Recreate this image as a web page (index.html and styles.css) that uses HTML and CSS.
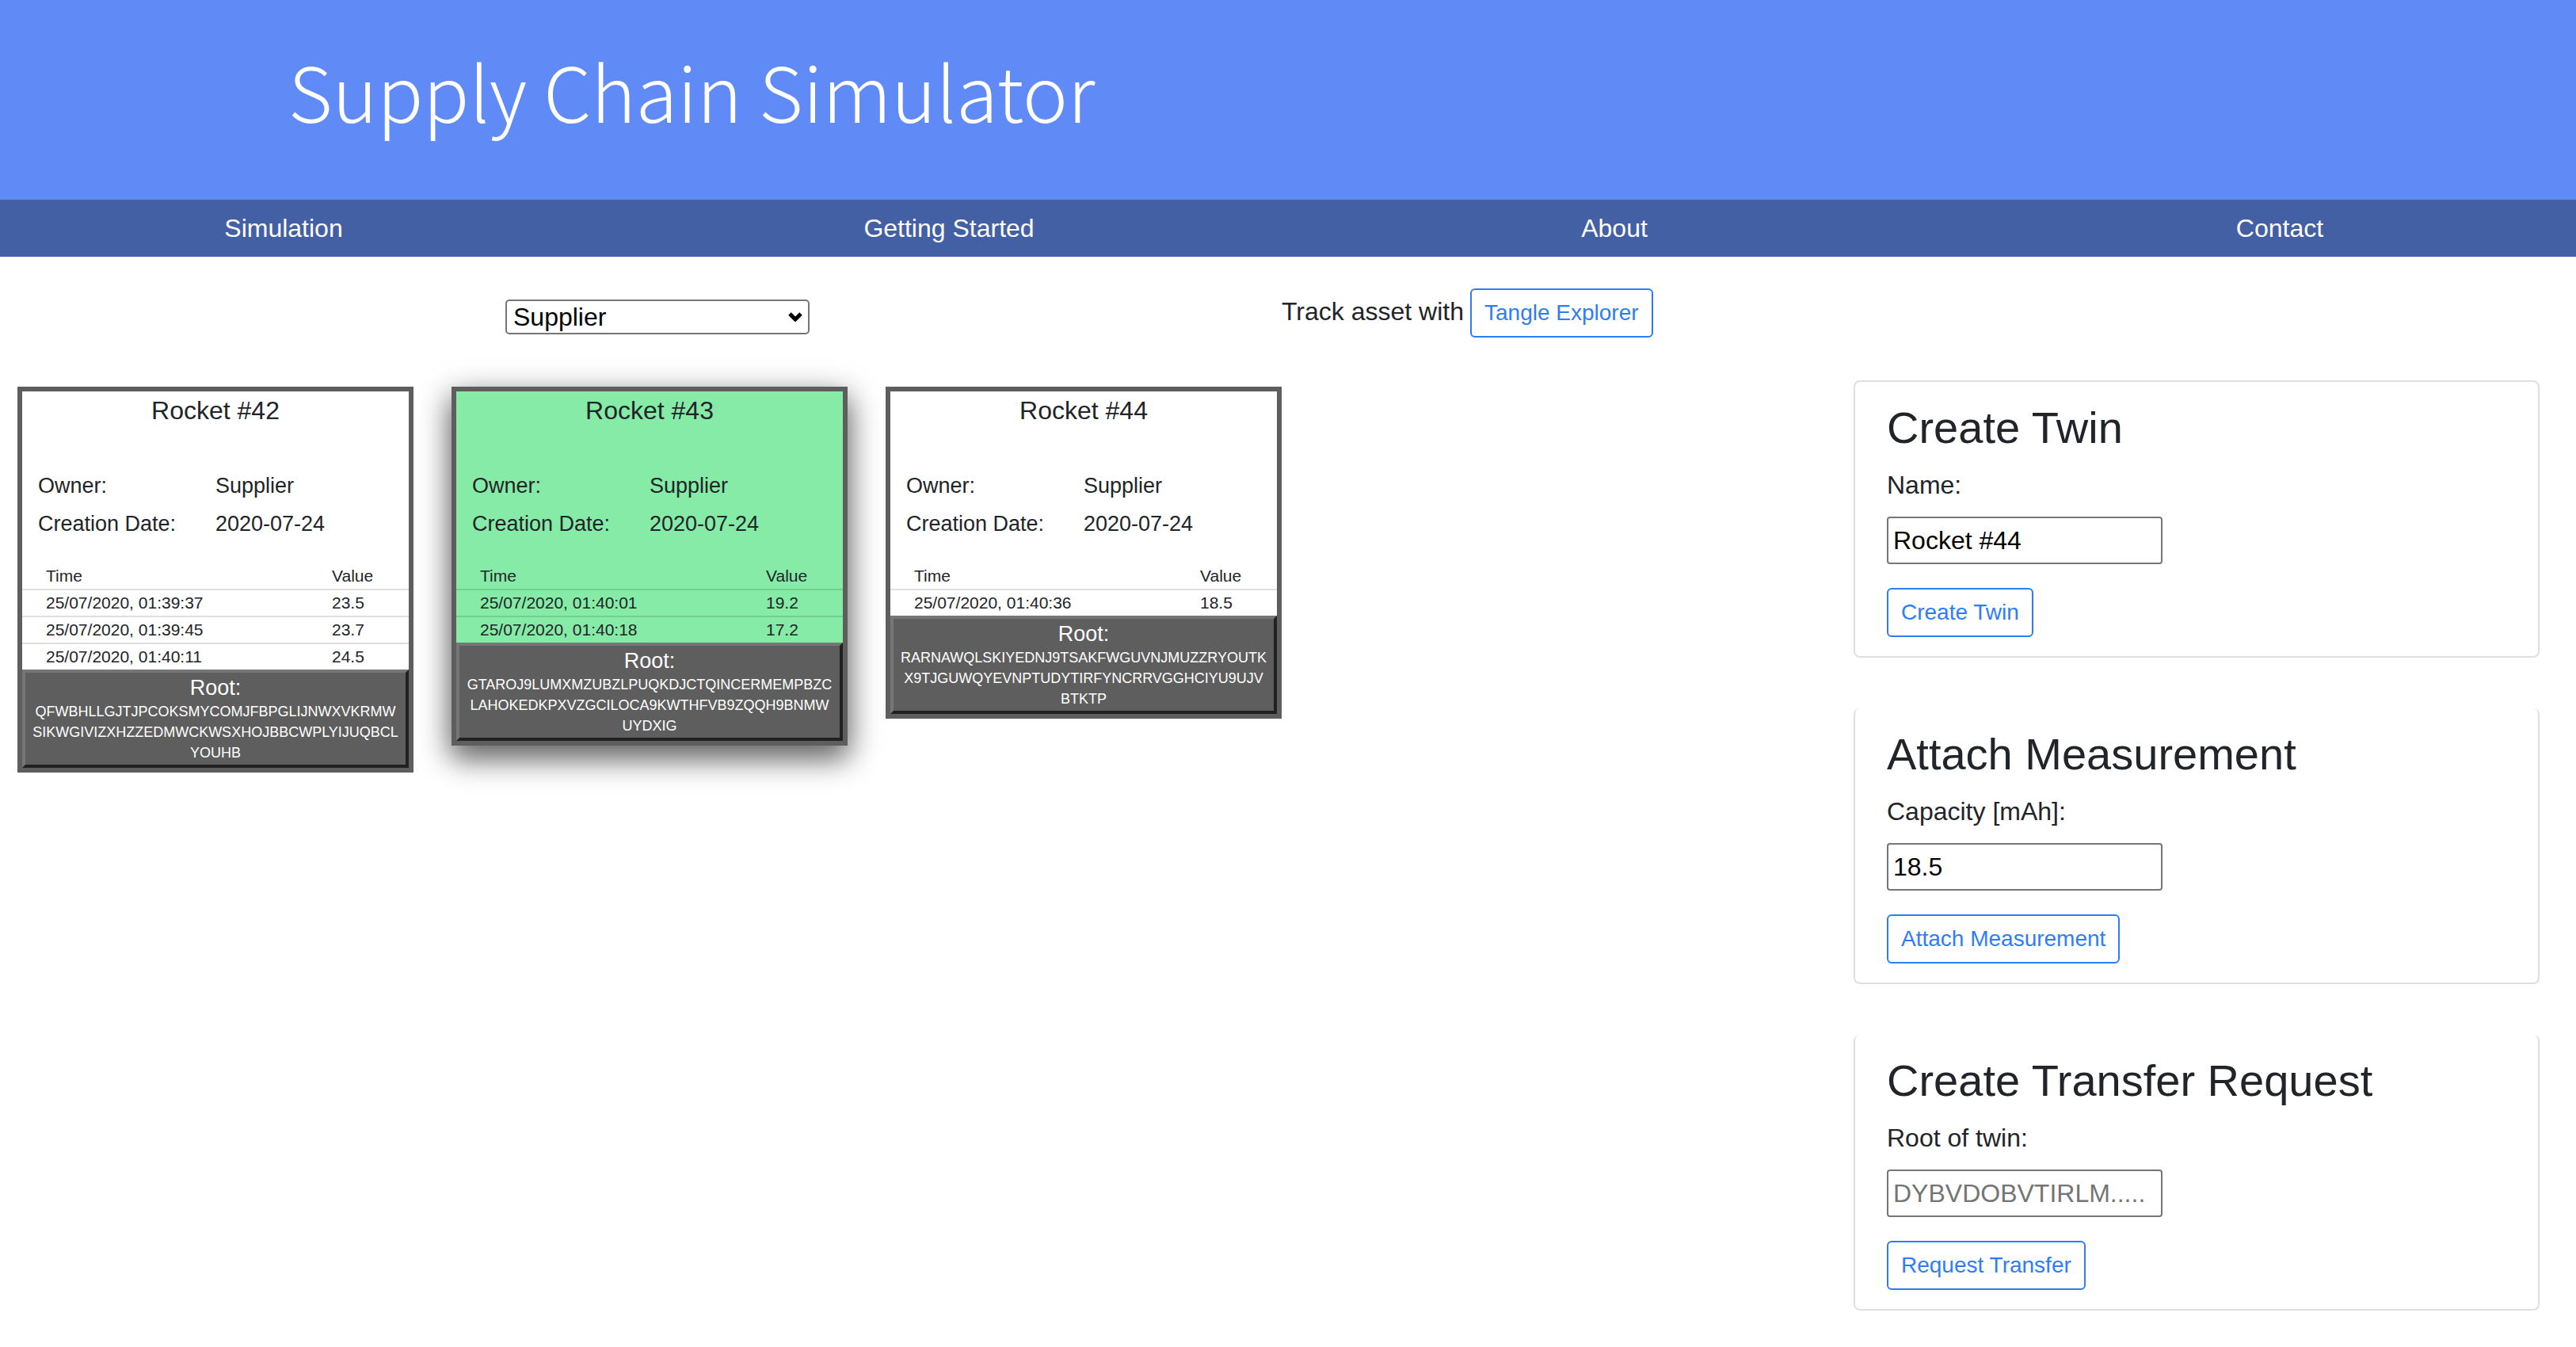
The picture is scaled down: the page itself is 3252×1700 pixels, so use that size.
FILE: index.html
```html
<!DOCTYPE html>
<html lang="en">
<head>
<meta charset="utf-8">
<meta name="viewport" content="width=device-width, initial-scale=1">
<title>Supply Chain Simulator</title>
<link rel="stylesheet" href="styles.css">
</head>
<body>
<header class="banner">
  <h1 class="banner-title">Supply Chain Simulator</h1>
</header>
<nav class="nav">
  <a class="nav-link" href="#simulation">Simulation</a>
  <a class="nav-link" href="#getting-started">Getting Started</a>
  <a class="nav-link" href="#about">About</a>
  <a class="nav-link" href="#contact">Contact</a>
</nav>
<section class="toolbar">
  <div class="role">
    <select class="role-select" aria-label="Role">
      <option>Supplier</option>
    </select>
    <svg class="role-arrow" viewBox="0 0 18 12" aria-hidden="true"><path d="M2 2l7 7 7-7" fill="none" stroke="#000" stroke-width="5"/></svg>
  </div>
  <div class="track">
    <span>Track asset with</span>
    <button class="btn" type="button">Tangle Explorer</button>
  </div>
</section>
<main class="content">
  <div class="twins">
    <article class="twin">
      <h2 class="twin-title">Rocket #42</h2>
      <dl class="facts">
        <dt>Owner:</dt><dd>Supplier</dd>
        <dt>Creation Date:</dt><dd>2020-07-24</dd>
      </dl>
      <table class="log">
        <thead><tr><th class="log-time">Time</th><th>Value</th></tr></thead>
        <tbody>
          <tr><td>25/07/2020, 01:39:37</td><td>23.5</td></tr>
          <tr><td>25/07/2020, 01:39:45</td><td>23.7</td></tr>
          <tr><td>25/07/2020, 01:40:11</td><td>24.5</td></tr>
        </tbody>
      </table>
      <button class="root" type="button">Root:<span class="root-hash">QFWBHLLGJTJPCOKSMYCOMJFBPGLIJNWXVKRMW<br>SIKWGIVIZXHZZEDMWCKWSXHOJBBCWPLYIJUQBCL<br>YOUHB</span></button>
    </article>
    <article class="twin twin-selected">
      <h2 class="twin-title">Rocket #43</h2>
      <dl class="facts">
        <dt>Owner:</dt><dd>Supplier</dd>
        <dt>Creation Date:</dt><dd>2020-07-24</dd>
      </dl>
      <table class="log">
        <thead><tr><th class="log-time">Time</th><th>Value</th></tr></thead>
        <tbody>
          <tr><td>25/07/2020, 01:40:01</td><td>19.2</td></tr>
          <tr><td>25/07/2020, 01:40:18</td><td>17.2</td></tr>
        </tbody>
      </table>
      <button class="root" type="button">Root:<span class="root-hash">GTAROJ9LUMXMZUBZLPUQKDJCTQINCERMEMPBZC<br>LAHOKEDKPXVZGCILOCA9KWTHFVB9ZQQH9BNMW<br>UYDXIG</span></button>
    </article>
    <article class="twin">
      <h2 class="twin-title">Rocket #44</h2>
      <dl class="facts">
        <dt>Owner:</dt><dd>Supplier</dd>
        <dt>Creation Date:</dt><dd>2020-07-24</dd>
      </dl>
      <table class="log">
        <thead><tr><th class="log-time">Time</th><th>Value</th></tr></thead>
        <tbody>
          <tr><td>25/07/2020, 01:40:36</td><td>18.5</td></tr>
        </tbody>
      </table>
      <button class="root" type="button">Root:<span class="root-hash">RARNAWQLSKIYEDNJ9TSAKFWGUVNJMUZZRYOUTK<br>X9TJGUWQYEVNPTUDYTIRFYNCRRVGGHCIYU9UJV<br>BTKTP</span></button>
    </article>
  </div>
  <aside class="panels">
    <form class="panel">
      <h2 class="panel-title">Create Twin</h2>
      <label class="panel-label" for="twin-name">Name:</label>
      <input class="panel-input" id="twin-name" type="text" value="Rocket #44">
      <button class="btn" type="button">Create Twin</button>
    </form>
    <form class="panel">
      <h2 class="panel-title">Attach Measurement</h2>
      <label class="panel-label" for="capacity">Capacity [mAh]:</label>
      <input class="panel-input" id="capacity" type="text" value="18.5">
      <button class="btn" type="button">Attach Measurement</button>
    </form>
    <form class="panel">
      <h2 class="panel-title">Create Transfer Request</h2>
      <label class="panel-label" for="twin-root">Root of twin:</label>
      <input class="panel-input" id="twin-root" type="text" placeholder="DYBVDOBVTIRLM.....">
      <button class="btn" type="button">Request Transfer</button>
    </form>
  </aside>
</main>
</body>
</html>
```
FILE: styles.css
```css
* {
  box-sizing: border-box;
}

body {
  margin: 0;
  background: #fff;
  color: #212529;
  font-family: "Liberation Sans", Arial, sans-serif;
  font-size: 32px;
  line-height: 48px;
}

h1,
h2,
dl,
dd {
  margin: 0;
  font-weight: 400;
}

button,
input,
select {
  font-family: inherit;
}

.banner {
  padding: 42px 364px 66px;
  background: #608bf7;
}

.banner-title {
  color: #fff;
  font-family: "Noto Sans CJK SC", "Open Sans", sans-serif;
  font-size: 96px;
  font-weight: 300;
  line-height: 144px;
}

.nav {
  display: flex;
  justify-content: space-between;
  padding: 12px 264px 12px 248px;
  background: #4460a5;
}

.nav-link {
  width: 220px;
  color: #fff;
  text-align: center;
  text-decoration: none;
  white-space: nowrap;
}

.toolbar {
  display: grid;
  grid-template-columns: 1fr 1fr;
  padding: 40px 58px 54px 42px;
}

.role {
  display: grid;
  grid-template-columns: 384px;
  align-items: center;
  justify-content: center;
  align-self: start;
  padding-top: 14px;
}

.role-select,
.role-arrow {
  grid-area: 1 / 1;
}

.role-select {
  height: 44px;
  padding: 0 8px;
  appearance: none;
  border: 2px solid #767676;
  border-radius: 5px;
  background: #fff;
  color: #000;
  font-size: 32px;
  line-height: 40px;
}

.role-arrow {
  justify-self: end;
  width: 18px;
  margin-right: 9px;
  pointer-events: none;
}

.track {
  display: flex;
  align-items: baseline;
  gap: 8px;
}

.btn {
  padding: 8px 16px;
  border: 2px solid #2f7cf7;
  border-radius: 6px;
  background: transparent;
  color: #2f7cf7;
  font-size: 28px;
  line-height: 42px;
}

.content {
  display: grid;
  grid-template-columns: minmax(0, 2340fr) minmax(0, 866fr);
  padding: 0 46px 46px 0;
}

.twins {
  display: flex;
  flex-wrap: wrap;
  align-items: flex-start;
  gap: 48px;
  padding: 8px 22px;
}

.twin {
  width: 500px;
  border: 6px solid #5e5e5e;
  background: #fff;
}

.twin-selected {
  background: #85eba6;
  box-shadow: 0 16px 32px rgba(0, 0, 0, 0.4), 0 12px 40px rgba(0, 0, 0, 0.38);
}

.twin-title {
  margin-bottom: 47px;
  font-size: 32px;
  text-align: center;
}

.facts {
  display: grid;
  grid-template-columns: 224px 1fr;
  margin-bottom: 26px;
  padding-left: 20px;
  font-size: 27px;
}

.log {
  width: 100%;
  border-collapse: collapse;
  font-size: 21px;
  line-height: 32px;
}

.log th,
.log td {
  padding: 0 0 0 30px;
  font-weight: 400;
  text-align: left;
}

.log td {
  border-top: 2px solid rgba(0, 0, 0, 0.12);
}

.log-time {
  width: 361px;
}

.root {
  display: block;
  width: 100%;
  padding: 2px 0;
  border: 4px solid;
  border-color: #767676 #212121 #212121 #767676;
  background: #5e5e5e;
  color: #fff;
  font-size: 27px;
  line-height: 34px;
  text-align: center;
}

.root-hash {
  display: flow-root;
  font-size: 18px;
  line-height: 26px;
  white-space: nowrap;
}

.panels {
  display: flex;
  flex-direction: column;
  gap: 64px;
}

.panel {
  display: flex;
  flex-direction: column;
  align-items: flex-start;
  padding: 24px 40px;
  border: 2px solid #dfdfdf;
  border-radius: 8px;
}

.panel + .panel {
  border-top: 0;
}

.panel-title {
  margin-bottom: 14px;
  font-size: 56px;
  line-height: 68px;
}

.panel-label {
  margin-bottom: 16px;
}

.panel-input {
  width: 348px;
  height: 60px;
  margin-bottom: 30px;
  padding: 0 6px;
  border: 2px solid #767676;
  border-radius: 4px;
  background: #fff;
  color: #000;
  font-size: 32px;
}

.panel-input::placeholder {
  color: #757575;
}
```
